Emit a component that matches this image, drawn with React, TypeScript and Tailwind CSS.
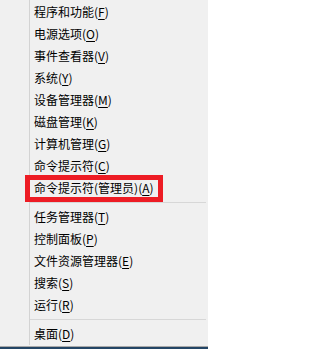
import React from "react";

type Item = { label: string; key: string };

const group1: Item[] = [
  { label: "程序和功能", key: "F" },
  { label: "电源选项", key: "O" },
  { label: "事件查看器", key: "V" },
  { label: "系统", key: "Y" },
  { label: "设备管理器", key: "M" },
  { label: "磁盘管理", key: "K" },
  { label: "计算机管理", key: "G" },
  { label: "命令提示符", key: "C" },
  { label: "命令提示符(管理员)", key: "A" },
];

const group2: Item[] = [
  { label: "任务管理器", key: "T" },
  { label: "控制面板", key: "P" },
  { label: "文件资源管理器", key: "E" },
  { label: "搜索", key: "S" },
  { label: "运行", key: "R" },
];

const group3: Item[] = [{ label: "桌面", key: "D" }];

function Row({ item }: { item: Item }) {
  return (
    <div className="h-[22px] pl-[4px] text-[12px] leading-[22px] text-[#000] whitespace-nowrap">
      {item.label}(<span className="underline underline-offset-[2px]">{item.key}</span>)
    </div>
  );
}

function Sep() {
  return (
    <div className="h-[7px] flex items-center pr-[2px]">
      <div className="h-px w-full bg-[#d7d7d7]" />
    </div>
  );
}

export default function App() {
  return (
    <div
      className="relative w-[208px] h-[349px] bg-[#f0f0f0] flex flex-col overflow-hidden"
      style={{ fontFamily: '"Noto Sans CJK SC", "Noto Sans", sans-serif' }}
    >
      <div className="flex h-[345px]">
        <div className="w-[29px] shrink-0" />
        <div className="w-px bg-[#d3d3d3] shrink-0" />
        <div className="flex-1 flex flex-col pt-[1px]">
          {group1.map((it) => (
            <Row key={it.label} item={it} />
          ))}
          <Sep />
          {group2.map((it) => (
            <Row key={it.label} item={it} />
          ))}
          <Sep />
          {group3.map((it) => (
            <Row key={it.label} item={it} />
          ))}
        </div>
      </div>
      <div className="h-px" />
      <div className="h-px bg-[#a9a9a9]" />
      <div className="h-[2px] bg-[#234565]" />
      <div className="absolute left-[25px] top-[175px] w-[138px] h-[27px] border-[5px] border-[#ed1c24]" />
    </div>
  );
}
